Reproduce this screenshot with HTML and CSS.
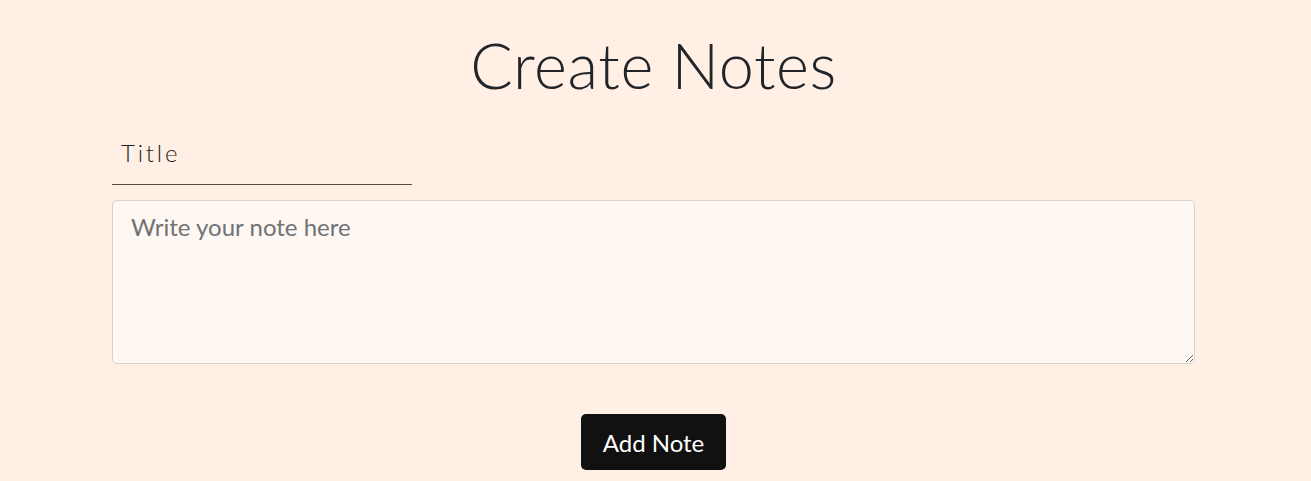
FILE: index.html
```html
<!DOCTYPE html>
<html lang="en">
<head>
<meta charset="utf-8">
<title>Create Notes</title>
<link rel="stylesheet" href="styles.css">
</head>
<body>
<main class="page">
  <h1 class="heading">Create Notes</h1>
  <form class="note-form">
    <input class="title-input" type="text" placeholder="Title">
    <textarea class="note-text" placeholder="Write your note here"></textarea>
    <div class="actions">
      <button type="button" class="add-btn">Add Note</button>
    </div>
  </form>
</main>
</body>
</html>
```
FILE: styles.css
```css
* { box-sizing: border-box; }
html, body { margin: 0; }
body {
  background: #ffefe4;
  font-family: "Lato", "Open Sans", sans-serif;
  color: #212529;
}
.page {
  display: flex;
  flex-direction: column;
  align-items: center;
  padding-top: 26px;
  padding-right: 4px;
}
.heading {
  margin: 0;
  font-size: 63px;
  font-weight: 300;
  line-height: 78px;
  color: #212529;
  letter-spacing: 0.6px;
}
.note-form {
  width: 1083px;
  display: flex;
  flex-direction: column;
  margin-top: 27px;
}
.title-input {
  width: 300px;
  height: 54px;
  border: none;
  border-bottom: 1px solid #5a4a42;
  background: transparent;
  padding: 0 9px 10px;
  font-family: inherit;
  font-size: 24px;
  font-weight: 300;
  letter-spacing: 2.8px;
  color: #1e1e1e;
  outline: none;
}
.title-input::placeholder { color: #1e1e1e; }
.note-text {
  margin-top: 15px;
  width: 100%;
  height: 164px;
  border: 1px solid #d6d2cf;
  border-radius: 5px;
  background: #fff7f1;
  padding: 11px 18px;
  font-family: inherit;
  font-size: 24px;
  color: #212529;
  resize: vertical;
}
.note-text::placeholder { color: #6e7378; }
.actions {
  display: flex;
  justify-content: center;
  margin-top: 50px;
}
.add-btn {
  width: 145px;
  height: 56px;
  border: none;
  border-radius: 5px;
  background: #111111;
  color: #ffffff;
  font-family: inherit;
  font-size: 24px;
  cursor: pointer;
}
```
